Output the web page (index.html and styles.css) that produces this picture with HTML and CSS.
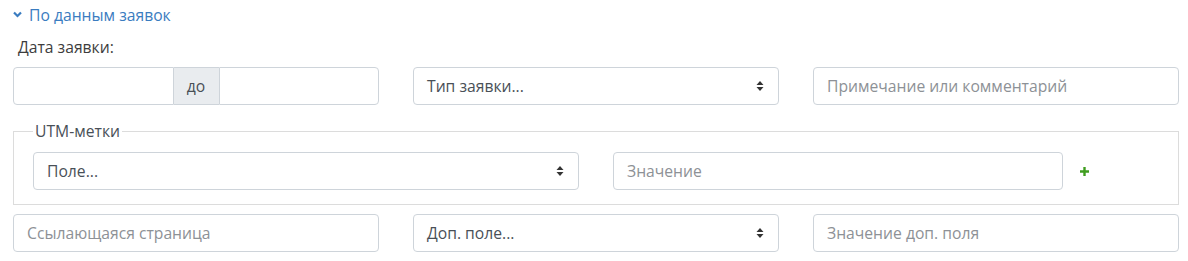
FILE: index.html
```html
<!DOCTYPE html>
<html lang="ru">
<head>
<meta charset="utf-8">
<link rel="stylesheet" href="styles.css">
</head>
<body>
<div class="page">
  <div class="toggle">
    <svg class="chev" width="9" height="7" viewBox="0 0 9 7"><path d="M1 1.5 L4.5 5 L8 1.5" fill="none" stroke="#3a7cc0" stroke-width="2.2"/></svg>
    <span>По данным заявок</span>
  </div>
  <div class="label">Дата заявки:</div>
  <div class="grid3">
    <div class="igroup">
      <div class="field first"></div>
      <div class="addon">до</div>
      <div class="field last"></div>
    </div>
    <div class="field select"><span class="val">Тип заявки...</span><svg class="arr" width="8" height="12" viewBox="0 0 8 12"><path d="M4 1 L7.5 5 H0.5 Z M4 11 L7.5 7 H0.5 Z" fill="#333"/></svg></div>
    <div class="field"><span class="ph">Примечание или комментарий</span></div>
  </div>
  <fieldset class="utm">
    <legend>UTM-метки</legend>
    <div class="utmgrid">
      <div class="field select"><span class="val">Поле...</span><svg class="arr" width="8" height="12" viewBox="0 0 8 12"><path d="M4 1 L7.5 5 H0.5 Z M4 11 L7.5 7 H0.5 Z" fill="#333"/></svg></div>
      <div class="field"><span class="ph">Значение</span></div>
      <div class="plus"><svg width="9" height="9" viewBox="0 0 9 9"><path d="M4.5 0 V9 M0 4.5 H9" stroke="#3f9d1f" stroke-width="2.4"/></svg></div>
    </div>
  </fieldset>
  <div class="grid3 row3">
    <div class="field"><span class="ph">Ссылающаяся страница</span></div>
    <div class="field select"><span class="val">Доп. поле...</span><svg class="arr" width="8" height="12" viewBox="0 0 8 12"><path d="M4 1 L7.5 5 H0.5 Z M4 11 L7.5 7 H0.5 Z" fill="#333"/></svg></div>
    <div class="field"><span class="ph">Значение доп. поля</span></div>
  </div>
</div>
</body>
</html>
```
FILE: styles.css
```css
* { box-sizing: border-box; }
body {
  margin: 0;
  background: #fff;
  font-family: "Open Sans", "Liberation Sans", sans-serif;
  font-size: 15.7px;
  color: #495057;
}
.page {
  padding: 0 9px 0 13px;
}
.toggle {
  display: flex;
  align-items: center;
  height: 29px;
  color: #3a7cc0;
}
.chev {
  margin-right: 7px;
  margin-top: -1px;
}
.label {
  margin-top: 7px;
  padding-left: 5px;
  line-height: 22px;
  color: #3d3d3d;
}
.grid3 {
  display: grid;
  grid-template-columns: 366px 366px 366px;
  column-gap: 34px;
  margin-top: 9px;
}
.field {
  height: 38px;
  border: 1px solid #ced4da;
  border-radius: 4px;
  background: #fff;
  display: flex;
  align-items: center;
  padding: 0 13px;
}
.ph { color: #8d9196; }
.val { color: #495057; flex: 1; }
.select { padding-right: 14px; }
.arr { display: block; }
.igroup {
  display: flex;
}
.igroup .field { flex: 1; }
.igroup .first { border-radius: 4px 0 0 4px; }
.igroup .last { border-radius: 0 4px 4px 0; }
.addon {
  width: 45px;
  height: 38px;
  flex: none;
  background: #e9ecef;
  border-top: 1px solid #ced4da;
  border-bottom: 1px solid #ced4da;
  display: flex;
  align-items: center;
  justify-content: center;
  color: #495057;
}
.utm {
  margin: 15px 0 0 0;
  padding: 10px 0 14px 19px;
  border: 1px solid #dcdcdc;
  min-width: 0;
}
.utm legend {
  padding: 0 2px;
  line-height: 22px;
  color: #495057;
}
.utmgrid {
  display: grid;
  grid-template-columns: 546px 450px 1fr;
  column-gap: 34px;
}
.plus {
  display: flex;
  align-items: center;
  margin-left: -17px;
}
.plus svg { display: block; }
.row3 { margin-top: 9px; }
```
